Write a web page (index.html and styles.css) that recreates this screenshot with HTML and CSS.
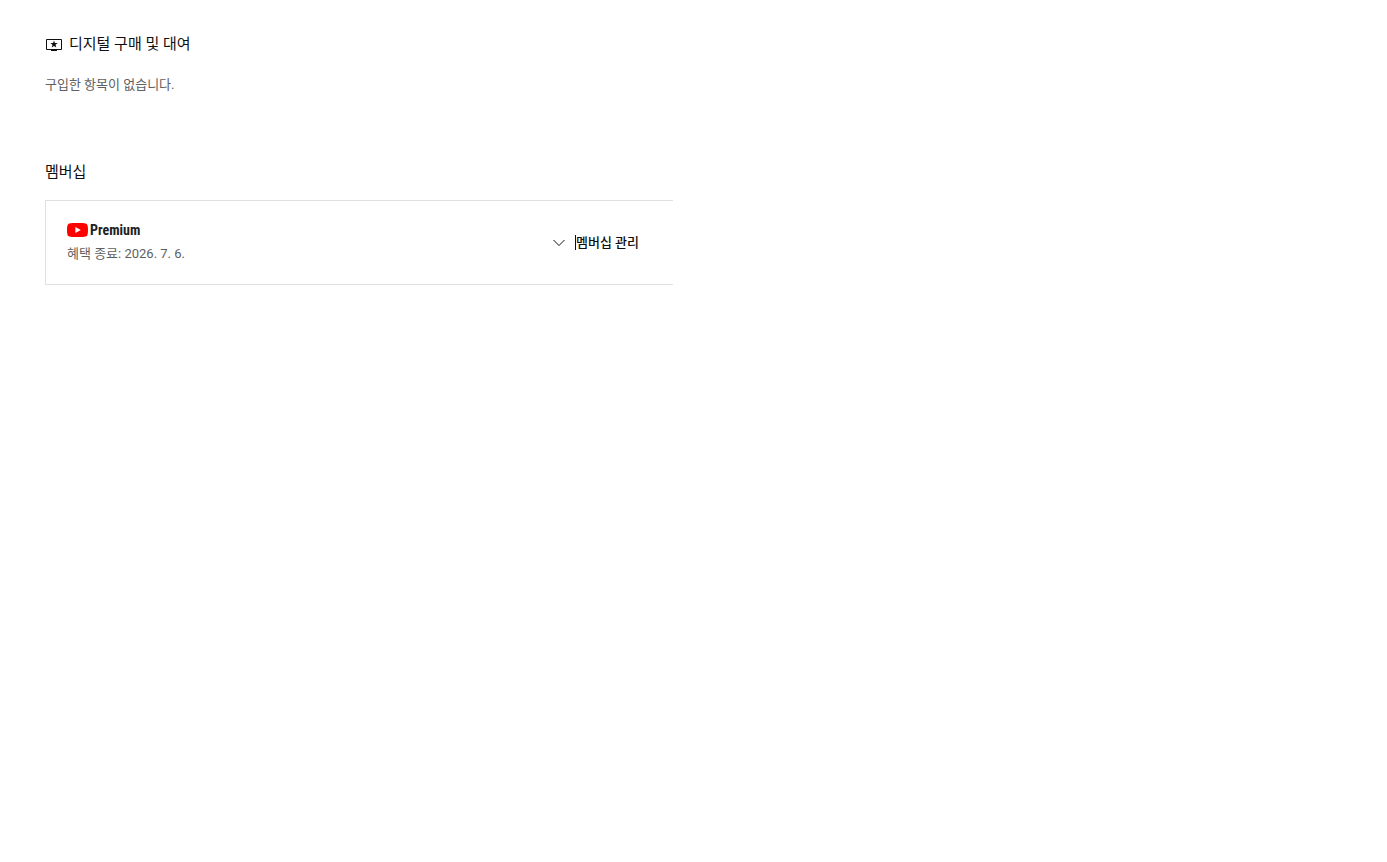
FILE: index.html
```html
<!DOCTYPE html>
<html lang="ko">
<head>
    <meta charset="UTF-8">
    <meta name="viewport" content="width=device-width, initial-scale=1.0">
    <title>구매 항목 및 멤버십</title>
    <link rel="stylesheet" href="styles.css">
</head>
<body>
    <main class="page">
        <section class="purchases">
            <h2 class="section-title">
                <svg class="title-icon" width="18" height="18" viewBox="0 0 18 18" aria-hidden="true">
                    <path d="M1.500 4.500h15v10h-15z" fill="none" stroke="#0f0f0f"/>
                    <path d="M6 14h6v2H6z" fill="#0f0f0f"/>
                    <path d="M9 5.500l.9 2.500 2.800.1-2.200 1.700.8 2.700L9 11l-2.300 1.500.8-2.700-2.200-1.700 2.800-.1z" fill="#0f0f0f"/>
                </svg>
                디지털 구매 및 대여
            </h2>
            <p class="message">구입한 항목이 없습니다.</p>
        </section>

        <section class="memberships">
            <h2 class="section-title">멤버십</h2>
            <div class="card">
                <div class="plan">
                    <div class="logo">
                        <svg width="21" height="14" viewBox="0 0 21 14" aria-hidden="true">
                            <path d="M3.500.2C7-.1 14-.1 17.500.2c1.800.2 2.900 1 3.200 2.800.4 3 .4 5 0 8-.3 1.800-1.400 2.600-3.200 2.800-3.500.3-10.500.3-14 0C1.700 13.600.6 12.800.3 11c-.4-3-.4-5 0-8C.6 1.200 1.700.4 3.500.2z" fill="#f00"/>
                            <path d="M8.400 4l5.400 3-5.400 3z" fill="#fff"/>
                        </svg>
                        <span class="logo-text">Premium</span>
                    </div>
                    <p class="expiry">혜택 종료: 2026. 7. 6.</p>
                </div>
                <button type="button" class="manage">
                    <svg width="12" height="8" viewBox="0 0 12 8" aria-hidden="true">
                        <path d="M.5 1L6 6.500 11.500 1" fill="none" stroke="#0f0f0f"/>
                    </svg>
                    <span class="manage-label">멤버십 관리</span>
                </button>
            </div>
        </section>
    </main>
</body>
</html>
```

FILE: styles.css
```css
body {
    margin: 0;
    background: #fff;
    color: #0f0f0f;
    font-family: Roboto, "Noto Sans CJK KR", sans-serif;
    font-size: 13px;
    line-height: 20px;
}
.page {
    max-width: 628px;
    padding: 32px 45px;
}
.section-title {
    display: flex;
    align-items: center;
    gap: 6px;
    margin: 0;
    font-size: 15px;
    font-weight: 400;
    line-height: 24px;
}
.message {
    margin: 19px 0 0;
    color: #606060;
}
.memberships {
    margin-top: 65px;
}
.card {
    display: flex;
    align-items: center;
    justify-content: space-between;
    margin-top: 16px;
    padding: 20px 34px 20px 21px;
    border: 1px solid #e0e0e0;
    border-right: 0;
}
.logo {
    display: flex;
    align-items: center;
    gap: 2px;
    height: 18px;
}
.logo-text {
    color: #212121;
    font-family: "Liberation Sans Narrow", "Roboto Condensed", Roboto, sans-serif;
    font-size: 14px;
    font-weight: 700;
    line-height: 18px;
}
.expiry {
    margin: 5px 0 0;
    color: #606060;
}
.manage {
    display: flex;
    align-items: center;
    gap: 10px;
    padding: 0;
    border: 0;
    background: none;
    color: #0f0f0f;
    font: inherit;
    font-weight: 500;
    cursor: pointer;
}
/* text cursor in front of the label */
.manage-label {
    border-left: 1px solid #0f0f0f;
    line-height: 15px;
}
```
